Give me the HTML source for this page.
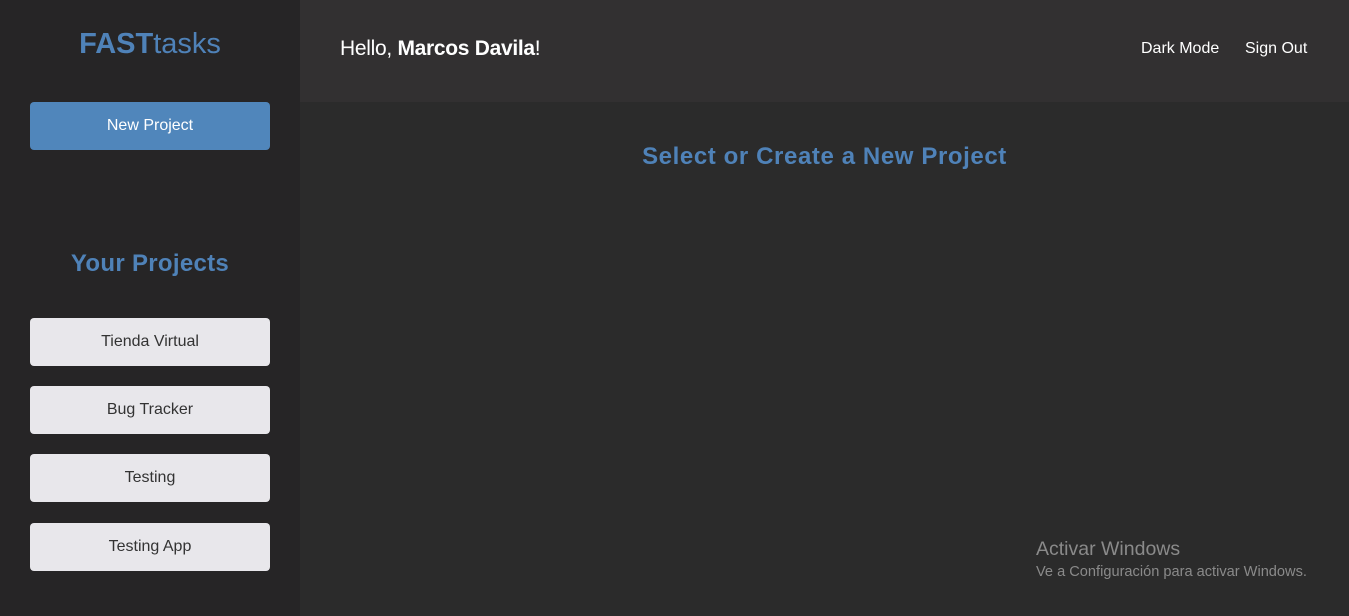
<!DOCTYPE html>
<html><head><style>
*{margin:0;padding:0;box-sizing:border-box}
body{width:1349px;height:616px;background:#2b2b2b;font-family:"Liberation Sans",sans-serif;position:relative;overflow:hidden}
.side{position:absolute;left:0;top:0;width:300px;height:616px;background:#262526}
.logo{position:absolute;left:0;width:300px;top:28px;text-align:center;font-size:29px;color:#4f82b8;letter-spacing:0px}
.logo b{font-weight:bold}
.btn{position:absolute;left:30px;width:240px;height:48px;border-radius:4px;text-align:center;line-height:48px;font-size:16px}
.np{top:102px;background:#5086bb;color:#fff}
.pj{background:#e8e7eb;color:#333}
.yp{position:absolute;left:0;width:300px;top:250px;text-align:center;font-size:24px;font-weight:bold;color:#4f82b8;letter-spacing:0.3px}
.top{position:absolute;left:300px;top:0;width:1049px;height:102px;background:#323031}
.hello{position:absolute;left:40px;top:37px;color:#fff;font-size:21px;letter-spacing:-0.3px}
.nav{position:absolute;top:40px;color:#fff;font-size:16px}
.title{position:absolute;left:300px;width:1049px;top:143px;text-align:center;font-size:24px;font-weight:bold;color:#4f82b8;letter-spacing:0.6px}
.w1{position:absolute;left:1036px;top:538px;color:#8a8a8a;font-size:19.5px}
.w2{position:absolute;left:1036px;top:564px;color:#8a8a8a;font-size:14.6px}
</style></head><body>
<div class="side">
<div class="logo"><b>FAST</b>tasks</div>
<div class="btn np">New Project</div>
<div class="yp">Your Projects</div>
<div class="btn pj" style="top:318px">Tienda Virtual</div>
<div class="btn pj" style="top:386px">Bug Tracker</div>
<div class="btn pj" style="top:454px">Testing</div>
<div class="btn pj" style="top:523px">Testing App</div>
</div>
<div class="top">
<div class="hello">Hello, <b>Marcos Davila</b>!</div>
<div class="nav" style="left:841px">Dark Mode</div>
<div class="nav" style="left:945px">Sign Out</div>
</div>
<div class="title">Select or Create a New Project</div>
<div class="w1">Activar Windows</div>
<div class="w2">Ve a Configuración para activar Windows.</div>
</body></html>
